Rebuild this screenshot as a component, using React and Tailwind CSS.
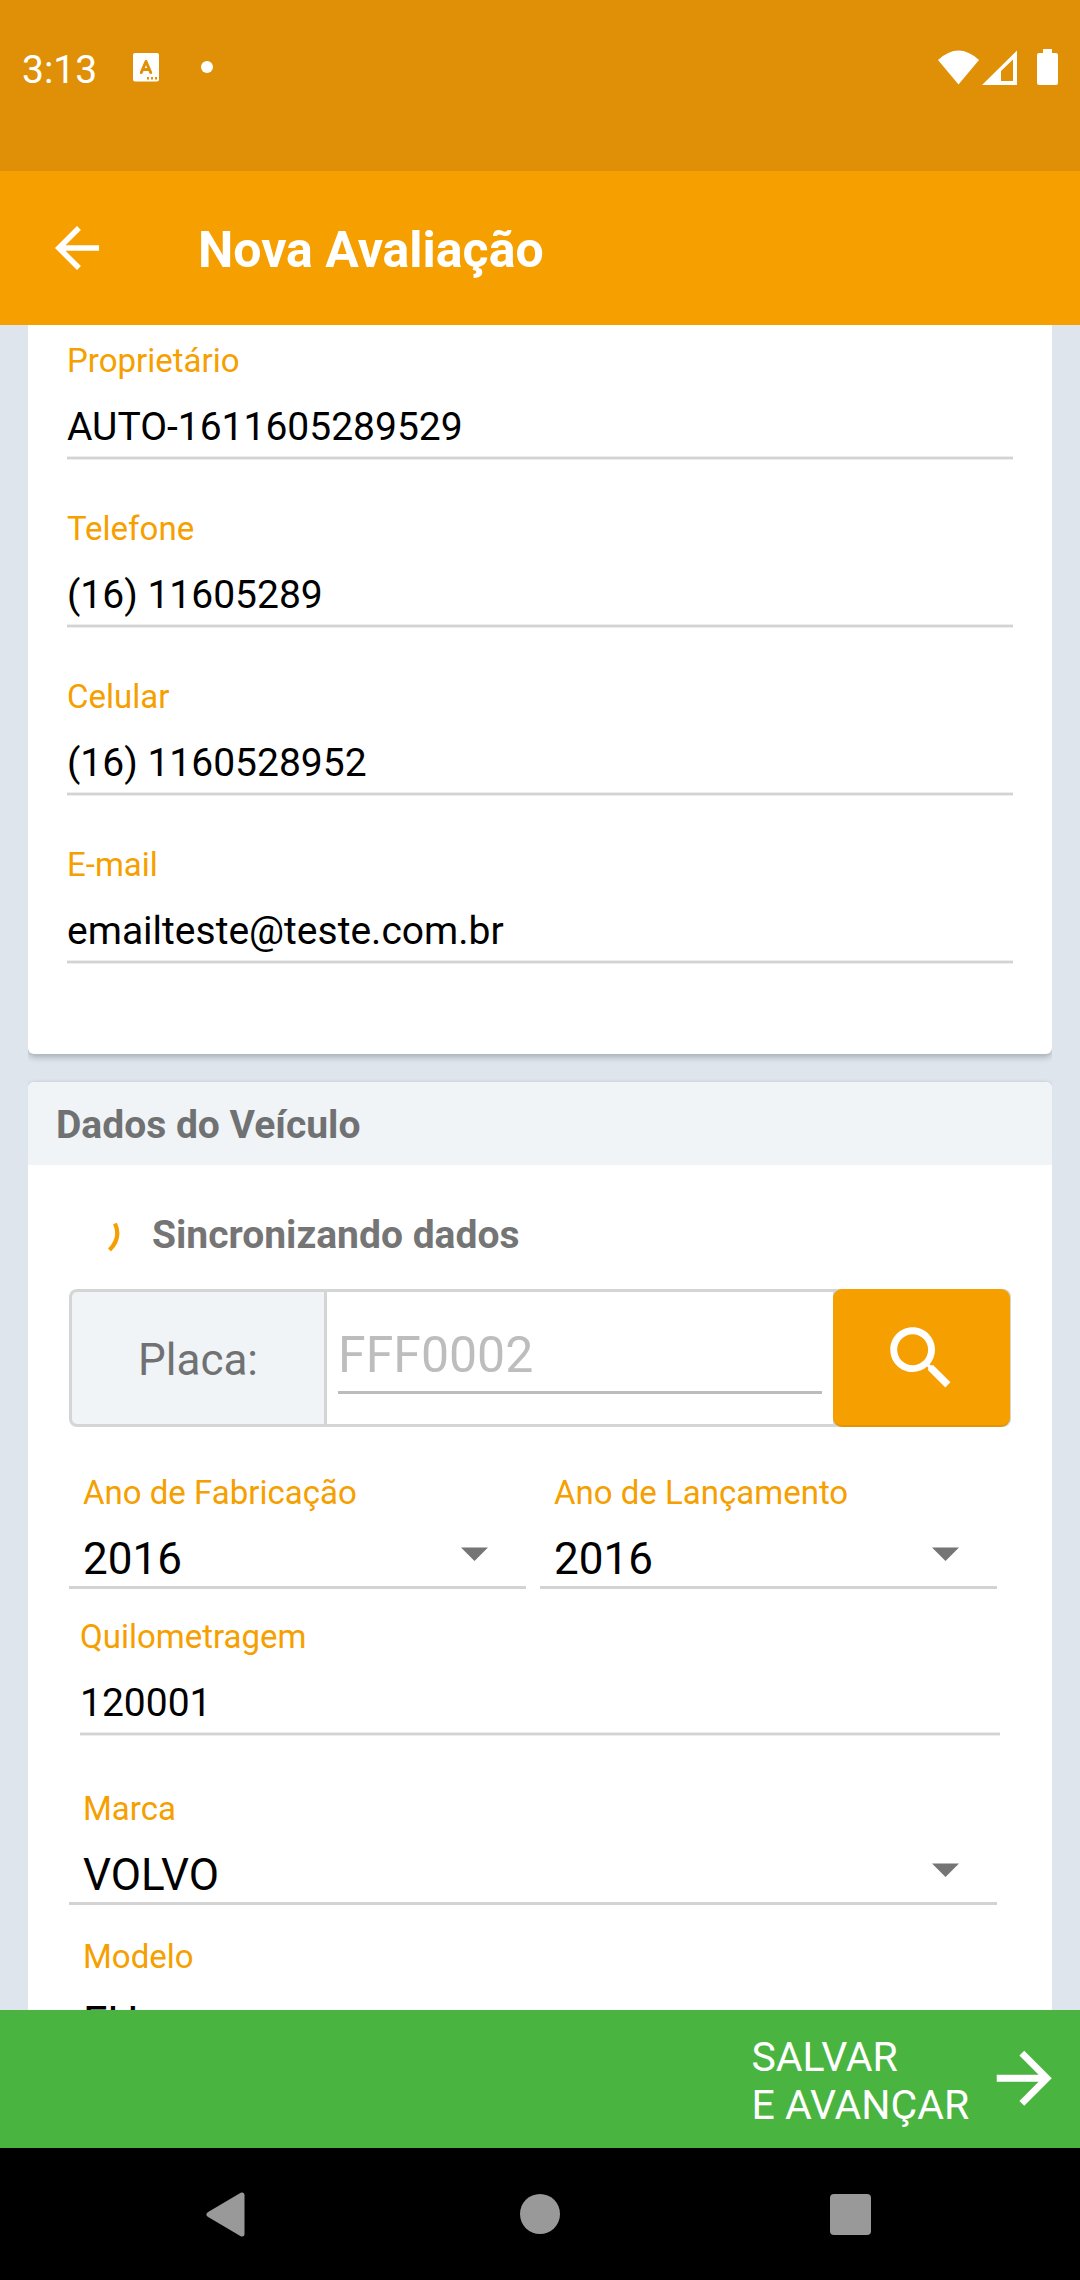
import React from "react";

function StatusBar() {
  return (
    <div className="flex h-[171px] items-start justify-between bg-[#df9007] pr-[22px] pl-[22px] text-white">
      <div className="flex h-[134px] items-center">
        <span className="w-[111px] pt-[5px] text-[39px] leading-[46px]">3:13</span>
        <svg className="h-[29px] w-[26px]" viewBox="0 0 26 29">
          <rect width="26" height="28.5" rx="2" fill="#fff" />
          <path d="M8.3 19.5 L13 8.5 L17.7 19.5 M9.8 16.4 H16.2" fill="none" stroke="#df9007" strokeWidth="3" strokeLinecap="round" strokeLinejoin="round" />
          <path d="M14 24h2v2.4h-2z M18 24h2v2.4h-2z M22 24h2v2.4h-2z" fill="#df9007" />
        </svg>
        <span className="ml-[42px] h-3 w-3 rounded-full bg-white" />
      </div>
      <div className="flex h-[134px] items-center">
        <svg className="h-[36px] w-[120px]" viewBox="938 49 120 36" fill="#fff">
          <path d="M938 60 Q958.500 41 979 60 L958.500 84.500Z" />
          <path fillRule="evenodd" d="M982 85 L1017 50.500 V85Z M1001 81 H1013 V59.500 L1001 71Z" />
          <path d="M1043 49h9v4h4a2 2 0 0 1 2 2v28a2 2 0 0 1-2 2h-17a2 2 0 0 1-2-2v-28a2 2 0 0 1 2-2h4z" />
        </svg>
      </div>
    </div>
  );
}

function Label({ children }) {
  return <div className="text-[33px] leading-[39px] whitespace-nowrap text-[#f5a000]">{children}</div>;
}

function TextField({ label, value }) {
  return (
    <div>
      <Label>{label}</Label>
      <div className="mt-6 text-[39px] leading-[46px] whitespace-nowrap text-black">{value}</div>
      <div className="mt-[6px] h-1 border-y border-[#ededed] bg-[#d3d3d3]" />
    </div>
  );
}

function SelectField({ label, value }) {
  return (
    <div className="flex-1">
      <div className="pl-[14px]">
        <Label>{label}</Label>
      </div>
      <div className="mt-[21px] flex h-[56px] items-start justify-between border-b-3 border-[#d3d3d3] pr-[38px] pl-[14px]">
        <span className="text-[44px] leading-[52px] text-black">{value}</span>
        <svg className="mt-[14px] h-[14px] w-[27px]" viewBox="0 0 27 14">
          <path d="M0 0.500H27L13.500 14Z" fill="#757575" />
        </svg>
      </div>
    </div>
  );
}

const owner = [
  { label: "Proprietário", value: "AUTO-1611605289529" },
  { label: "Telefone", value: "(16) 11605289" },
  { label: "Celular", value: "(16) 1160528952" },
  { label: "E-mail", value: "emailteste@teste.com.br" },
];

export default function App() {
  return (
    <div className="flex h-[2280px] w-[1080px] flex-col overflow-hidden bg-[#dee5ed] font-[Roboto,sans-serif]">
      <StatusBar />
      <header className="flex h-[154px] items-center bg-[#f5a000] pl-11 text-white">
        <svg className="h-[66px] w-[66px]" viewBox="0 0 24 24" fill="currentColor">
          <path d="M20 11H7.830l5.590-5.590L12 4l-8 8 8 8 1.410-1.410L7.830 13H20v-2z" />
        </svg>
        <h1 className="ml-[88px] pt-1 text-[50px] leading-[58px] font-bold">Nova Avaliação</h1>
      </header>

      <main className="mx-7 h-[1685px] overflow-hidden">
        <section className="flex h-[729px] flex-col gap-[49px] rounded-b-[6px] bg-white px-[39px] pt-4 shadow-[0_3px_6px_rgba(0,0,0,0.25)]">
          {owner.map((f) => (
            <TextField key={f.label} label={f.label} value={f.value} />
          ))}
        </section>

        <section className="mt-7 h-[1000px] rounded-t-[6px] bg-white shadow-[0_1px_4px_rgba(0,0,0,0.22)]">
          <h2 className="h-[83px] rounded-t-[6px] bg-[#f0f4f7] pt-5 pl-7 text-[39px] leading-[46px] font-bold text-[#707172]">
            Dados do Veículo
          </h2>
          <div className="flex h-[124px] items-start pt-[47px] pl-[79px]">
            <svg className="mt-[10px] h-[30px] w-[14px]" viewBox="107 1222 14 30">
              <path d="M115 1223.500 C119.300 1233 117.500 1242 109.500 1250" fill="none" stroke="#f5a000" strokeWidth="4.200" />
            </svg>
            <span className="ml-[31px] text-[39px] leading-[46px] font-bold text-[#757575]">Sincronizando dados</span>
          </div>

          <div className="ml-[41px] flex h-[138px] w-[942px] rounded-[8px] bg-[#d4d5d5]">
            <div className="my-[3px] ml-[3px] flex w-[252px] items-center justify-center rounded-l-[5px] bg-[#f0f4f7] text-[44px] leading-[52px] text-[#707172]">
              <span className="pt-1">Placa:</span>
            </div>
            <div className="my-[3px] ml-[3px] w-[506px] bg-white px-[11px] pt-[34px]">
              <div className="h-[68px] border-b-3 border-[#bcbcbc] text-[50px] leading-[58px] text-[#bdbdbd]">FFF0002</div>
            </div>
            <button className="flex h-[138px] w-[177px] items-start rounded-[9px] border-b-2 border-[#e39405] bg-[#f5a000] pt-[28px] pl-[47px]">
              <svg className="h-[82.5px] w-[82.5px]" viewBox="0 0 24 24" fill="#fff">
                <path d="M15.500 14h-.790l-.280-.270C15.410 12.590 16 11.110 16 9.500 16 5.910 13.090 3 9.500 3S3 5.910 3 9.500 5.910 16 9.500 16c1.610 0 3.090-.590 4.230-1.570l.270.280v.790l5 4.990L20.490 19l-4.990-5zm-6 0C7.010 14 5 11.990 5 9.500S7.010 5 9.500 5 14 7.010 14 9.500 11.990 14 9.500 14z" />
              </svg>
            </button>
          </div>

          <div className="mt-[46px] ml-[41px] flex w-[928px] gap-[14px]">
            <SelectField label="Ano de Fabricação" value="2016" />
            <SelectField label="Ano de Lançamento" value="2016" />
          </div>
          <div className="mt-[28px] ml-[52px] w-[920px]">
            <TextField label="Quilometragem" value="120001" />
          </div>
          <div className="mt-[53px] ml-[41px] flex w-[928px]">
            <SelectField label="Marca" value="VOLVO" />
          </div>
          <div className="mt-[32px] ml-[41px] flex w-[928px]">
            <SelectField label="Modelo" value="FH" />
          </div>
        </section>
      </main>

      <footer className="flex h-[138px] items-start justify-end bg-[#49b43f] pr-[15px] text-white">
        <div className="w-[231px] pt-[23px] text-[41px] leading-[48px] whitespace-nowrap">
          SALVAR
          <br />E AVANÇAR
        </div>
        <svg className="mt-[27px] h-[82.5px] w-[82.5px]" viewBox="0 0 24 24" fill="currentColor">
          <path d="M12 4l-1.410 1.410L16.170 11H4v2h12.170l-5.580 5.590L12 20l8-8z" />
        </svg>
      </footer>

      <nav className="flex h-[132px] items-center bg-black pl-[206px]">
        <svg className="h-[45px] w-[39px]" viewBox="0 0 39 45">
          <path d="M3 22.500 L36 3 V42Z" fill="#999" stroke="#999" strokeWidth="5" strokeLinejoin="round" />
        </svg>
        <span className="ml-[275px] h-10 w-10 rounded-full bg-[#999]" />
        <span className="ml-[270px] h-[41px] w-[41px] rounded-[4px] bg-[#999]" />
      </nav>
    </div>
  );
}
